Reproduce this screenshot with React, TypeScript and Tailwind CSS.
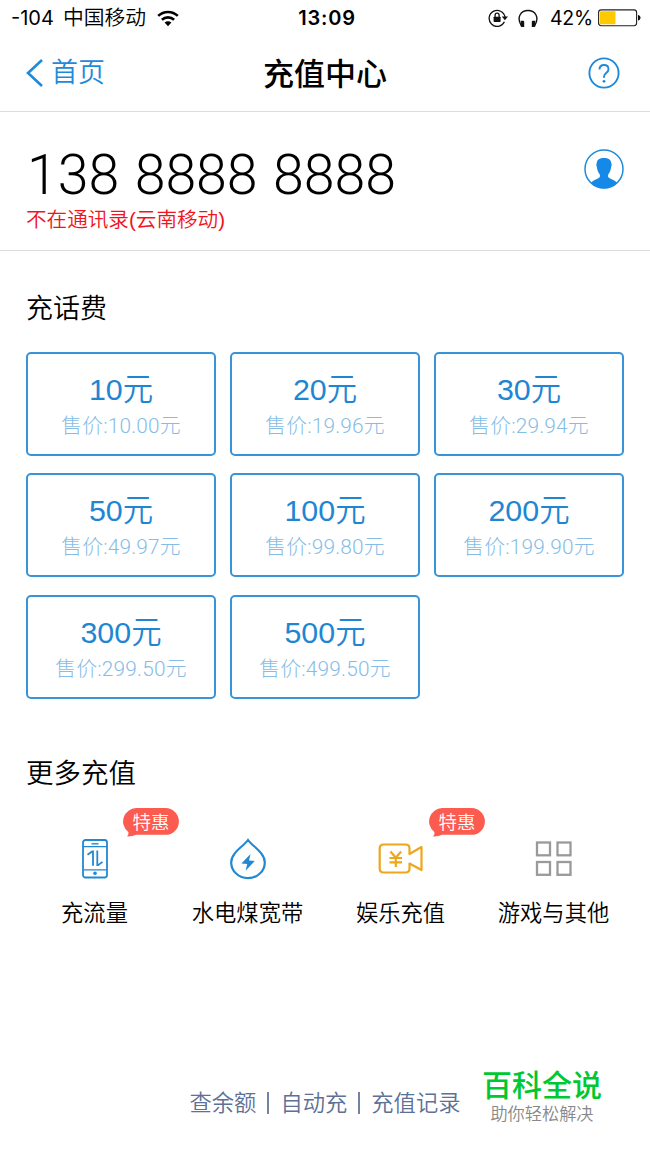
import type { ReactNode } from "react";

type Plan = {
  amount: string;
  price: string;
};

type Service = {
  label: string;
  icon: ReactNode;
  hot?: boolean;
};

const plans: Plan[] = [
  { amount: "10", price: "10.00" },
  { amount: "20", price: "19.96" },
  { amount: "30", price: "29.94" },
  { amount: "50", price: "49.97" },
  { amount: "100", price: "99.80" },
  { amount: "200", price: "199.90" },
  { amount: "300", price: "299.50" },
  { amount: "500", price: "499.50" },
];

const WifiIcon = () => (
  <svg width="22" height="17" viewBox="0 0 22 17" fill="none" stroke="#000" strokeWidth="2.6">
    <path d="M1.2 5.9C6.8 .6 15.2 .6 20.8 5.9" />
    <path d="M4.9 9.8C8.4 6.6 13.6 6.6 17.1 9.8" />
    <path d="M7.6 12.6C9.6 10.9 12.4 10.9 14.4 12.6L11 16.2Z" fill="#000" stroke="none" />
  </svg>
);

const LockIcon = () => (
  <svg width="20" height="18" viewBox="0 0 20 18" fill="none" stroke="#111" strokeWidth="1.3">
    <path d="M16.4 12.8A8 8 0 1 1 17 8" />
    <path d="M13.8 7.4H20L16.9 11.2Z" fill="#111" stroke="none" />
    <rect x="5.6" y="7.7" width="7" height="5.2" rx=".6" fill="#111" stroke="none" />
    <path d="M7.1 8V6.2a2 2 0 0 1 4 0V8" />
  </svg>
);

const HeadphoneIcon = () => (
  <svg width="20" height="19" viewBox="0 0 20 19" fill="none" stroke="#111" strokeWidth="1.4">
    <path d="M3.2 16.5C-1.6 8.5 2.5 1.5 10 1.5s11.6 7 6.8 15" />
    <path
      d="M2.7 11.8h2.5q1 0 1 1v5.2H3.7q-1 0-1-1zM17.3 11.8h-2.5q-1 0-1 1v5.2h2.5q1 0 1-1z"
      fill="#111"
      stroke="none"
    />
  </svg>
);

const BatteryIcon = () => (
  <svg width="43" height="18" viewBox="0 0 43 18">
    <rect x=".6" y=".9" width="38" height="15.8" rx="2.6" fill="#fff" stroke="#222" strokeWidth="1.1" />
    <rect x="2" y="2.3" width="15.5" height="13" rx="1" fill="#ffc900" />
    <path d="M40 5.8q2.6 1 2.6 3t-2.6 3z" fill="#111" />
  </svg>
);

const HelpIcon = () => (
  <svg width="32" height="32" viewBox="0 0 32 32" fill="none" stroke="#1e8ada" strokeWidth="1.9">
    <circle cx="16" cy="16" r="14.6" />
    <path d="M11.5 12.6C11.5 9.6 13.4 8 16 8s4.5 1.7 4.5 4.2c0 3.6-4.5 4-4.5 7.3v1.2" />
    <circle cx="16" cy="24.3" r="1.4" fill="#1e8ada" stroke="none" />
  </svg>
);

const ContactIcon = () => (
  <svg width="40" height="40" viewBox="0 0 40 40">
    <circle cx="20" cy="20" r="19" fill="#fff" stroke="#1e8ada" strokeWidth="1.5" />
    <path
      d="M6.8 34c2-2.600 5.700-3.800 7.900-5 1.500-.9 1.600-2.500.8-4-1.600-2-2.300-4.300-2.600-7-.9-1.700-.6-3.200-.1-3.900C12.700 10.800 15.800 9 20 9s7.300 1.800 7.200 5.100c.5.700.8 2.200-.1 3.900-.3 2.700-1 5-2.600 7-.8 1.500-.7 3.100.8 4 2.200 1.200 5.900 2.400 7.900 5C29.500 37.500 25 39.400 20 39.400S10.500 37.500 6.800 34z"
      fill="#1489e8"
    />
  </svg>
);

const PhoneIcon = () => (
  <svg width="26" height="40" viewBox="0 0 26 40" fill="none" stroke="#2388d2" strokeWidth="1.8">
    <rect x="1" y="1" width="24" height="37.5" rx="2.5" />
    <path d="M1 7.7h24M1 30.8h24" strokeWidth="1.3" />
    <path d="M9.500 4.800h7" strokeWidth="1.4" />
    <path d="M5.500 15.800l4.700-3.300h.8v14.300M15.300 11.500v14.700h.8l4.400-3.300" />
    <circle cx="13" cy="34.3" r="1.8" fill="#2388d2" stroke="none" />
  </svg>
);

const DropIcon = () => (
  <svg width="38" height="42" viewBox="0 0 38 42" fill="none" stroke="#2388d2" strokeWidth="2.2">
    <path d="M19 2C15 7.8 2.2 14.5 2.2 24.4a16.8 15.8 0 0 0 33.6 0C35.8 14.5 23 7.8 19 2z" />
    <path d="M21.500 16L12.400 25.600l5.800.3-1.600 6.800 9.200-9.800-5.800-.3z" fill="#2388d2" stroke="none" />
  </svg>
);

const VideoIcon = () => (
  <svg width="46" height="32" viewBox="0 0 46 32" fill="none" stroke="#eea61c" strokeWidth="2.2" strokeLinejoin="round">
    <path d="M31.500 11V5.500q0-4-4-4H5.700q-4 0-4 4v20q0 4 4 4h21.800q4 0 4-4V20.500L43.500 27V4z" />
    <path d="M12.500 8.500l5.300 6.300 5.300-6.300M17.800 14.800V24M11.500 15h12.600M11.500 19.300h12.600" />
  </svg>
);

const GridIcon = () => (
  <svg width="38" height="36" viewBox="0 0 38 36" fill="none" stroke="#9a9a9a" strokeWidth="2.3">
    <rect x="2" y="1.5" width="13" height="12.800" />
    <rect x="22.500" y="1.5" width="13" height="12.800" />
    <rect x="2" y="21" width="13" height="12.800" />
    <rect x="22.500" y="21" width="13" height="12.800" />
  </svg>
);

const HotBadge = () => (
  <div className="absolute left-[105px] top-0 h-[29px] w-[56px]">
    <svg className="absolute left-0 top-0" width="56" height="29" viewBox="0 0 56 29">
      <path
        d="M13.2 0H42.5a13.4 13.4 0 0 1 0 26.8H13.2Q9.500 28.800 4 28.600 6 26.500 5.300 24A13.4 13.4 0 0 1 13.2 0z"
        fill="#fc5b50"
      />
    </svg>
    <span className="relative block h-[27px] text-center text-[18.5px] font-[350] leading-[28px] text-white">特惠</span>
  </div>
);

const services: Service[] = [
  { label: "充流量", icon: <PhoneIcon />, hot: true },
  { label: "水电煤宽带", icon: <DropIcon /> },
  { label: "娱乐充值", icon: <VideoIcon />, hot: true },
  { label: "游戏与其他", icon: <GridIcon /> },
];

const PlanCard = ({ amount, price }: Plan) => (
  <button className="flex h-[104px] flex-col items-center rounded-[5px] border-2 border-[#3893d8] pt-[16px]">
    <span className="h-[39px] whitespace-nowrap font-['Liberation_Sans','Noto_Sans_CJK_SC',sans-serif] text-[30.4px] font-[350] leading-[39px] text-[#1e86d2]">
      {amount}元
    </span>
    <span className="h-[34px] whitespace-nowrap font-['Roboto','Noto_Sans_CJK_SC',sans-serif] text-[20.8px] font-light leading-[34px] tracking-[0.2px] text-[#86bde6]">
      售价:{price}元
    </span>
  </button>
);

const App = () => {
  return (
    <div className="relative flex h-[1156px] w-[650px] flex-col overflow-hidden bg-white font-['Inter','Noto_Sans_CJK_SC',sans-serif] text-black">
      <header className="h-[112px] shrink-0 border-b border-[#dddddd]">
        <div className="grid h-[36px] grid-cols-[1fr_auto_1fr] items-center text-[20px] leading-[36px]">
          <div className="flex items-center pl-[11px]">
            <span>-104</span>
            <span className="ml-[9px] mr-[11px] text-[20.8px] font-[350]">中国移动</span>
            <WifiIcon />
          </div>
          <span className="translate-x-[2px] font-semibold tracking-[0.8px]">13:09</span>
          <div className="flex items-center justify-end pr-[9px]">
            <LockIcon />
            <span className="ml-[10px] mr-[12px]">
              <HeadphoneIcon />
            </span>
            <span className="mr-[5px] text-[19.5px] tracking-[-0.2px]">42%</span>
            <BatteryIcon />
          </div>
        </div>
        <nav className="grid h-[74px] grid-cols-[1fr_auto_1fr] items-center">
          <a className="flex items-center pl-[26px] text-[27px] font-[350] leading-[40px] text-[#1e8ada]">
            <svg className="mr-[8px]" width="17" height="28" viewBox="0 0 17 28" fill="none" stroke="#1e8ada" strokeWidth="2.6">
              <path d="M16 1L2 14l14 13" />
            </svg>
            首页
          </a>
          <h1 className="pt-px text-[31px] font-medium leading-[44px]">充值中心</h1>
          <div className="flex justify-end pr-[30px]">
            <HelpIcon />
          </div>
        </nav>
      </header>

      <section className="flex h-[139px] shrink-0 justify-between border-b border-[#dddddd] pl-[27px] pr-[26px]">
        <div className="pt-[36px]">
          <div className="h-[56px] whitespace-nowrap font-['Roboto',sans-serif] text-[55.4px] font-light leading-[56px] [word-spacing:2px]">
            138 8888 8888
          </div>
          <p className="-ml-px h-[32px] font-['Liberation_Sans','Noto_Sans_CJK_SC',sans-serif] text-[20.6px] font-[350] leading-[32px] text-[#f0141e]">
            不在通讯录(云南移动)
          </p>
        </div>
        <div className="pt-[37px]">
          <ContactIcon />
        </div>
      </section>

      <section className="shrink-0 px-[26px] pt-[38px]">
        <h2 className="h-[63px] text-[27px] font-[350] leading-[40px]">充话费</h2>
        <div className="grid grid-cols-3 gap-x-[14px] gap-y-[17.4px]">
          {plans.map((plan) => (
            <PlanCard key={plan.amount} amount={plan.amount} price={plan.price} />
          ))}
        </div>
      </section>

      <section className="shrink-0 pt-[53px]">
        <h2 className="h-[56px] pl-[26px] text-[27.5px] font-[350] leading-[42px]">更多充值</h2>
        <div className="grid grid-cols-4 pl-[18px] pr-[20px]">
          {services.map((service) => (
            <div key={service.label} className="relative flex flex-col items-center">
              {service.hot && <HotBadge />}
              <div className="flex h-[102px] items-center justify-center">{service.icon}</div>
              <span className="-mt-[14px] whitespace-nowrap text-[22.3px] font-[350] leading-[34px]">{service.label}</span>
            </div>
          ))}
        </div>
      </section>

      <footer className="mt-auto flex items-center justify-center pb-[36px] text-[22.3px] font-[350] leading-[34px] text-[#5d7096]">
        <span>查余额</span>
        <i className="mx-[11px] h-[22px] w-[2px] bg-[#7383a3]" />
        <span>自动充</span>
        <i className="mx-[11px] h-[22px] w-[2px] bg-[#7383a3]" />
        <span>充值记录</span>
      </footer>

      <div className="absolute left-[482px] top-[1064px] flex w-[120px] flex-col items-center">
        <span className="whitespace-nowrap text-[30px] font-medium leading-[42px] text-[#00c832]">百科全说</span>
        <span className="whitespace-nowrap text-[17.2px] font-[350] leading-[15px] text-[#888888]">助你轻松解决</span>
      </div>
    </div>
  );
};

export default App;
